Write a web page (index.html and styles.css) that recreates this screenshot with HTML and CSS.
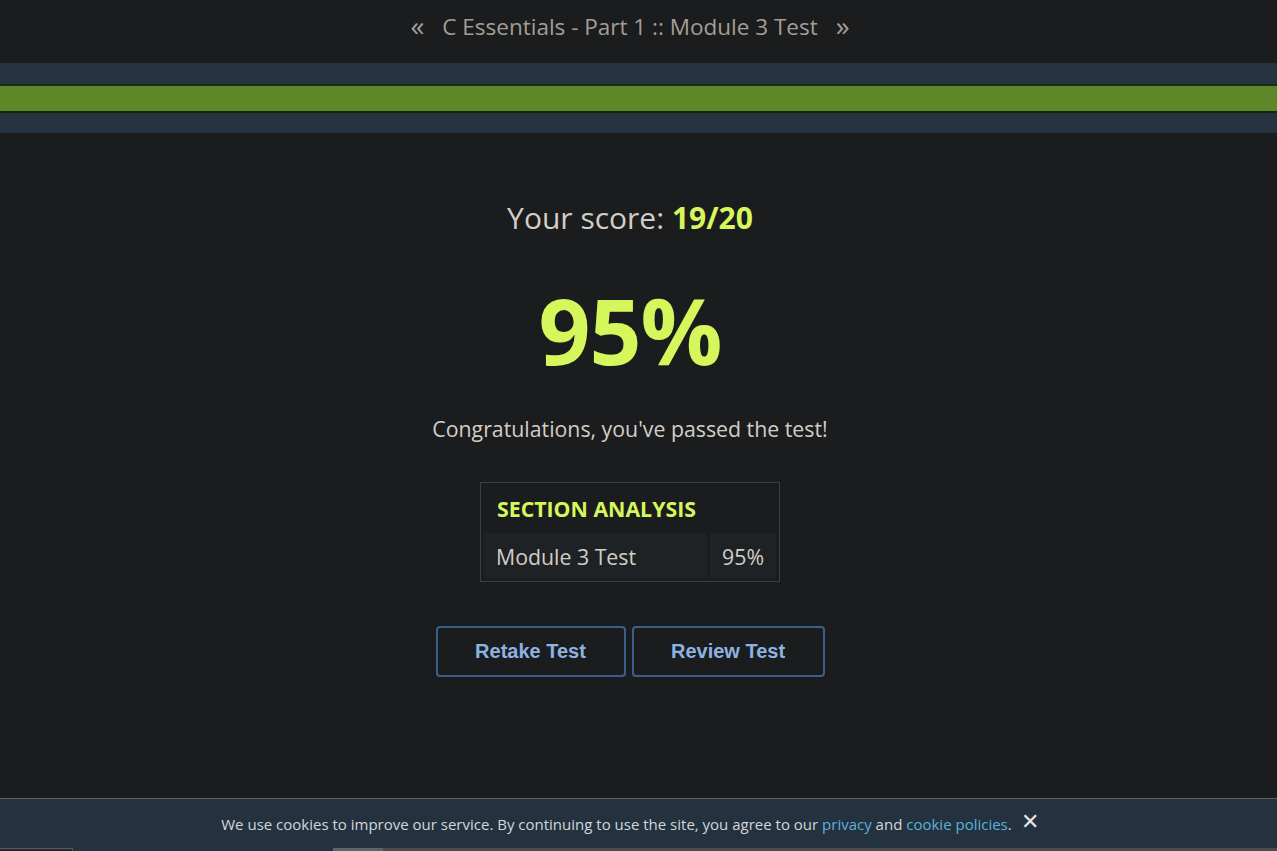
FILE: index.html
```html
<!DOCTYPE html>
<html lang="en">
<head>
<meta charset="utf-8">
<title>Module 3 Test</title>
<link rel="stylesheet" href="styles.css">
</head>
<body>
<header class="topbar">
  <span class="nav-arrow">&laquo;</span>
  <span class="title">C Essentials - Part 1 :: Module 3 Test</span>
  <span class="nav-arrow">&raquo;</span>
</header>
<div class="progress">
  <div class="progress-bar"></div>
</div>
<main class="result">
  <div class="score">Your score: <strong>19/20</strong></div>
  <div class="percent">95%</div>
  <p class="congrats">Congratulations, you've passed the test!</p>
  <table class="analysis">
    <thead>
      <tr><th colspan="2">SECTION ANALYSIS</th></tr>
    </thead>
    <tbody>
      <tr><td class="name">Module 3 Test</td><td class="val">95%</td></tr>
    </tbody>
  </table>
  <div class="actions">
    <button class="btn btn-retake">Retake Test</button>
    <button class="btn btn-review">Review Test</button>
  </div>
</main>
<div class="bottom">
  <div class="cookie">
    <span class="cookie-text">We use cookies to improve our service. By continuing to use the site, you agree to our <a href="#">privacy</a> and <a href="#">cookie policies</a>.</span>
    <span class="cookie-close">&#x2715;</span>
  </div>
  <div class="dock">
    <span class="dock-a"></span>
    <span class="dock-b"></span>
    <span class="dock-c"></span>
    <span class="dock-d"></span>
  </div>
</div>
</body>
</html>
```
FILE: styles.css
```css
html, body {
  margin: 0;
  padding: 0;
  background: #1b1c1e;
  font-family: "Open Sans", "Liberation Sans", sans-serif;
  color: #d2cec6;
  height: 100%;
  overflow: hidden;
}
.topbar {
  height: 63px;
  display: flex;
  align-items: center;
  justify-content: center;
  gap: 18px;
  color: #a39e95;
  font-size: 22.5px;
  padding: 0 17px 10px 0;
  box-sizing: border-box;
}
.nav-arrow {
  font-size: 28px;
  line-height: 1;
  position: relative;
  top: -2px;
}
.progress {
  background: #263340;
  padding: 21px 0 20px;
}
.progress-bar {
  height: 25px;
  background: #5e8828;
  border-top: 2px solid #1f2a1c;
  border-bottom: 2px solid #18220f;
}
.result {
  display: flex;
  flex-direction: column;
  align-items: center;
  padding: 65px 17px 0 0;
}
.score {
  font-size: 30px;
  line-height: 40px;
  color: #d2cec6;
}
.score strong {
  color: #d6f75c;
  font-weight: 700;
}
.percent {
  margin-top: 37px;
  font-size: 91px;
  font-weight: 700;
  line-height: 110px;
  color: #d6f75c;
  letter-spacing: -1px;
}
.congrats {
  margin: 30px 0 0;
  font-size: 21.3px;
  line-height: 28px;
}
.analysis {
  margin-top: 39px;
  border: 1px solid #3c3d40;
  border-spacing: 3px;
  width: 300px;
  font-size: 21.3px;
}
.analysis th {
  text-align: left;
  color: #d6f75c;
  font-weight: 700;
  padding: 8px 12px 7px 13px;
  line-height: 29px;
}
.analysis td {
  background: #1f2225;
  line-height: 28px;
  padding: 10px 12px 7px;
}
.analysis td.val {
  text-align: right;
  width: 40px;
}
.actions {
  display: flex;
  gap: 6px;
  margin-top: 44px;
}
.btn {
  font-family: "Liberation Sans", Arial, sans-serif;
  font-weight: 700;
  font-size: 20px;
  color: #8db3e2;
  background: transparent;
  border: 2px solid #3a5e8e;
  border-radius: 4px;
  height: 51px;
  padding: 0;
}
.btn-retake { width: 190px; }
.btn-review { width: 193px; }
.bottom {
  position: fixed;
  left: 0;
  right: 0;
  bottom: 0;
}
.cookie {
  height: 50px;
  background: #243240;
  border-top: 1px solid #5b6065;
  box-sizing: border-box;
  display: flex;
  align-items: center;
  justify-content: center;
  gap: 9px;
  padding: 0 17px 0 0;
}
.cookie-text {
  font-size: 15px;
  color: #d3d6d9;
}
.cookie a {
  color: #5cb0db;
  text-decoration: none;
}
.cookie-close {
  font-size: 22px;
  color: #e4e4e4;
  position: relative;
  top: -4px;
}
.dock {
  display: flex;
  height: 3px;
  background: #243240;
}
.dock-a {
  width: 72px;
  background: #262a2e;
  border-top: 1px solid #55595c;
  border-right: 1px solid #55595c;
}
.dock-b { width: 260px; }
.dock-c { width: 50px; background: #5d666b; }
.dock-d { flex: 1; background: #4b4b4b; }
```
